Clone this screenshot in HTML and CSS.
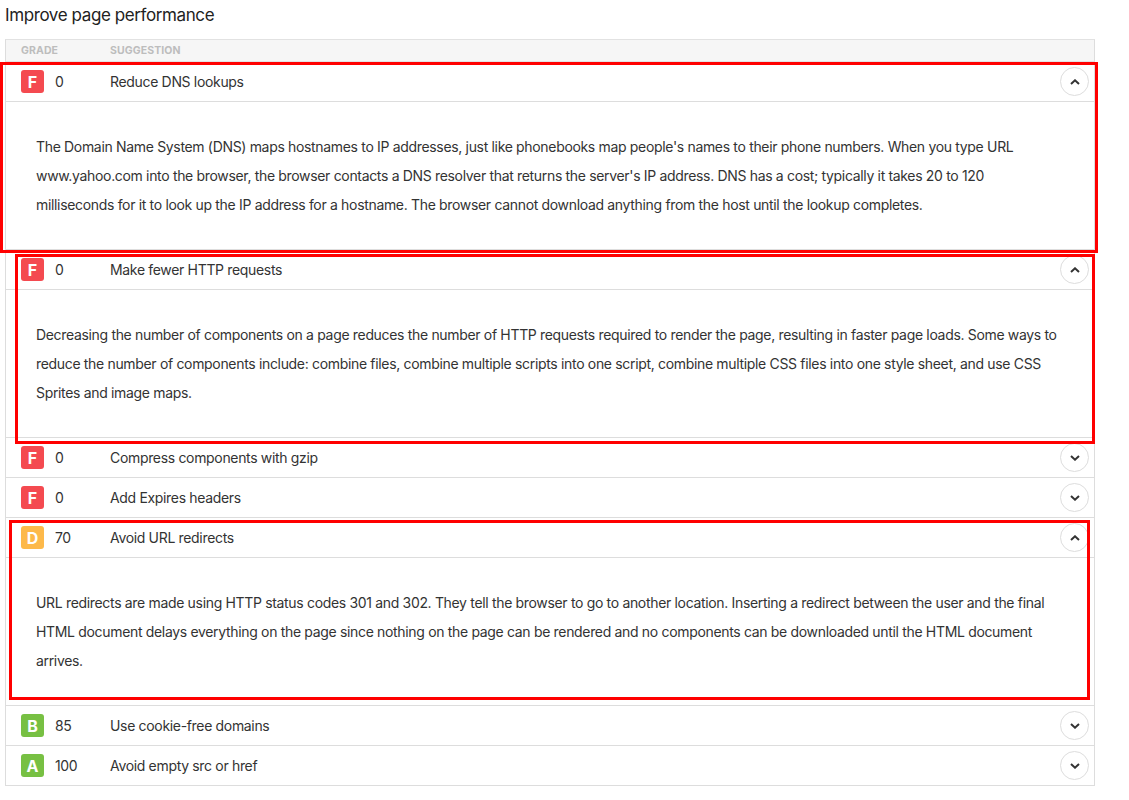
FILE: index.html
```html
<!DOCTYPE html>
<html>
<head>
<meta charset="utf-8">
<link rel="stylesheet" href="styles.css">
</head>
<body>
<h1 class="title">Improve page performance</h1>
<div class="table">
  <div class="thead">
    <span class="th grade-col">GRADE</span>
    <span class="th">SUGGESTION</span>
  </div>

  <div class="row">
    <div class="row-head">
      <span class="badge f">F</span><span class="score">0</span>
      <span class="name">Reduce DNS lookups</span>
      <span class="toggle up"><svg viewBox="0 0 10 6" width="10" height="6"><path d="M1 5 L5 1.3 L9 5" fill="none" stroke="#333" stroke-width="2"/></svg></span>
    </div>
    <div class="detail">The Domain Name System (DNS) maps hostnames to IP addresses, just like phonebooks map people's names to their phone numbers. When you type URL www.yahoo.com into the browser, the browser contacts a DNS resolver that returns the server's IP address. DNS has a cost; typically it takes 20 to 120 milliseconds for it to look up the IP address for a hostname. The browser cannot download anything from the host until the lookup completes.</div>
  </div>

  <div class="row">
    <div class="row-head">
      <span class="badge f">F</span><span class="score">0</span>
      <span class="name">Make fewer HTTP requests</span>
      <span class="toggle up"><svg viewBox="0 0 10 6" width="10" height="6"><path d="M1 5 L5 1.3 L9 5" fill="none" stroke="#333" stroke-width="2"/></svg></span>
    </div>
    <div class="detail">Decreasing the number of components on a page reduces the number of HTTP requests required to render the page, resulting in faster page loads. Some ways to reduce the number of components include: combine files, combine multiple scripts into one script, combine multiple CSS files into one style sheet, and use CSS Sprites and image maps.</div>
  </div>

  <div class="row">
    <div class="row-head">
      <span class="badge f">F</span><span class="score">0</span>
      <span class="name">Compress components with gzip</span>
      <span class="toggle"><svg viewBox="0 0 10 6" width="10" height="6"><path d="M1 1 L5 4.7 L9 1" fill="none" stroke="#333" stroke-width="2"/></svg></span>
    </div>
  </div>

  <div class="row">
    <div class="row-head">
      <span class="badge f">F</span><span class="score">0</span>
      <span class="name">Add Expires headers</span>
      <span class="toggle"><svg viewBox="0 0 10 6" width="10" height="6"><path d="M1 1 L5 4.7 L9 1" fill="none" stroke="#333" stroke-width="2"/></svg></span>
    </div>
  </div>

  <div class="row">
    <div class="row-head">
      <span class="badge d">D</span><span class="score">70</span>
      <span class="name">Avoid URL redirects</span>
      <span class="toggle up"><svg viewBox="0 0 10 6" width="10" height="6"><path d="M1 5 L5 1.3 L9 5" fill="none" stroke="#333" stroke-width="2"/></svg></span>
    </div>
    <div class="detail">URL redirects are made using HTTP status codes 301 and 302. They tell the browser to go to another location. Inserting a redirect between the user and the final HTML document delays everything on the page since nothing on the page can be rendered and no components can be downloaded until the HTML document arrives.</div>
  </div>

  <div class="row">
    <div class="row-head">
      <span class="badge ok">B</span><span class="score">85</span>
      <span class="name">Use cookie-free domains</span>
      <span class="toggle"><svg viewBox="0 0 10 6" width="10" height="6"><path d="M1 1 L5 4.7 L9 1" fill="none" stroke="#333" stroke-width="2"/></svg></span>
    </div>
  </div>

  <div class="row">
    <div class="row-head">
      <span class="badge ok">A</span><span class="score">100</span>
      <span class="name">Avoid empty src or href</span>
      <span class="toggle"><svg viewBox="0 0 10 6" width="10" height="6"><path d="M1 1 L5 4.7 L9 1" fill="none" stroke="#333" stroke-width="2"/></svg></span>
    </div>
  </div>
</div>

<div class="mark mark1"></div>
<div class="mark mark2"></div>
<div class="mark mark3"></div>
</body>
</html>
```

FILE: styles.css
```css
* { box-sizing: border-box; }
body {
  margin: 0;
  background: #fff;
  font-family: Inter, "Noto Sans", sans-serif;
  color: #333;
  position: relative;
}
.title {
  margin: 0;
  padding: 4px 0 0 5px;
  height: 39px;
  font-size: 17px;
  font-weight: 400;
  color: #222;
  line-height: 22px;
  letter-spacing: -0.4px;
}
.table {
  margin-left: 5px;
  width: 1090px;
  border: 1px solid #ddd;
  border-top: 1px solid #e2e2e2;
}
.thead {
  height: 22px;
  background: #f6f6f6;
  display: flex;
  align-items: center;
  padding-left: 15px;
  border-bottom: 1px solid #e2e2e2;
}
.th {
  font-size: 10.5px;
  font-weight: 700;
  color: #bdbdbd;
  letter-spacing: 0.1px;
}
.grade-col { width: 89px; }
.row { border-bottom: 1px solid #ddd; }
.row:last-child { border-bottom: none; }
.row-head {
  height: 39px;
  display: flex;
  align-items: center;
  padding: 0 5px 0 15px;
  font-size: 14px;
  letter-spacing: -0.33px;
}
.badge {
  width: 23px;
  height: 23px;
  border-radius: 3px;
  color: #fff;
  font-weight: 700;
  font-size: 16px;
  letter-spacing: 0;
  display: flex;
  align-items: center;
  justify-content: center;
  margin-right: 11px;
}
.badge.f { background: #f44a50; }
.badge.d { background: #fdb94a; }
.badge.ok { background: #77c043; }
.score { width: 55px; color: #333; }
.name { flex: 1; color: #333; }
.toggle {
  width: 29px;
  height: 29px;
  border: 1px solid #ddd;
  border-radius: 50%;
  display: flex;
  align-items: center;
  justify-content: center;
}
.toggle svg { display: block; }
.detail {
  border-top: 1px solid #ddd;
  padding: 30px 30px 30px 30px;
  font-size: 14px;
  line-height: 29px;
  color: #333;
  letter-spacing: -0.33px;
}
.mark {
  position: absolute;
  border: 3px solid #ff0000;
  pointer-events: none;
}
.mark1 { left: 0; top: 62px; width: 1098px; height: 191px; }
.mark2 { left: 15px; top: 254px; width: 1080px; height: 190px; }
.mark3 { left: 9px; top: 520px; width: 1081px; height: 180px; }
```
